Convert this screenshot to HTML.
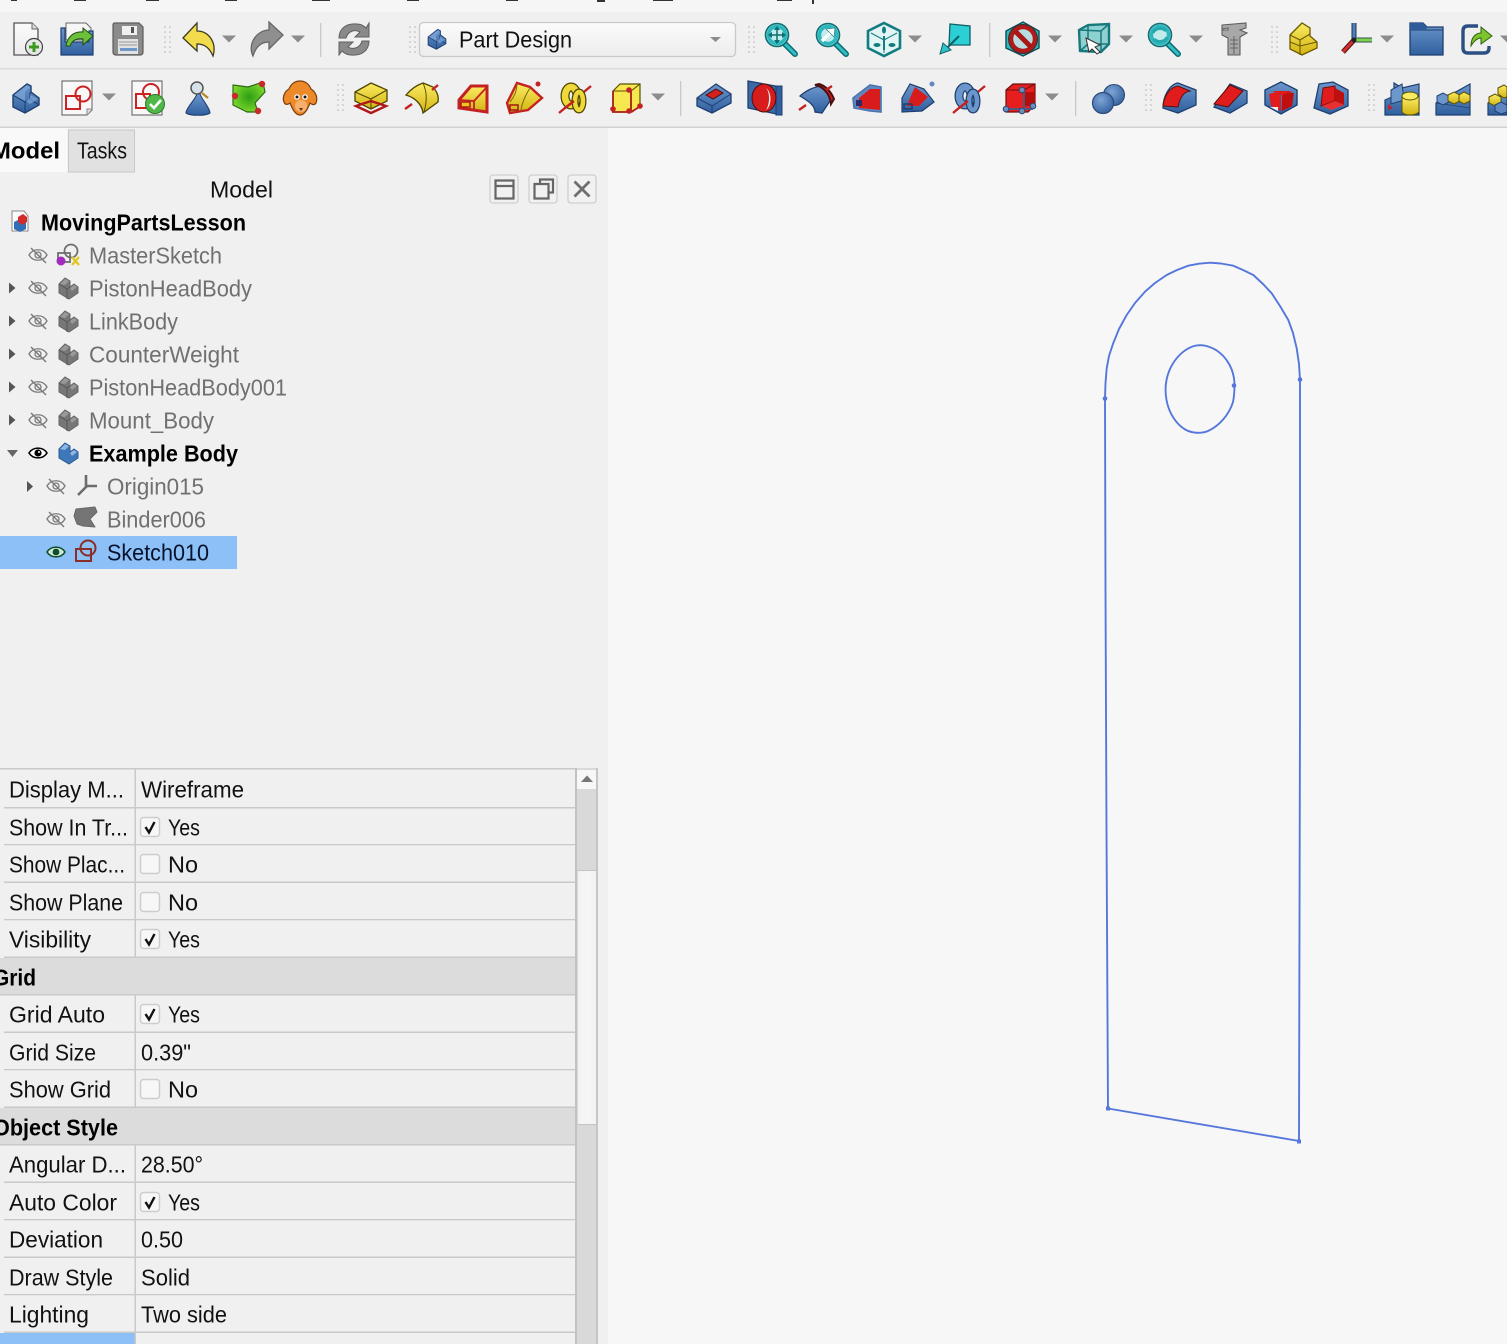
<!DOCTYPE html>
<html><head><meta charset="utf-8">
<style>
html,body{margin:0;padding:0;background:#f0f0f0;width:1507px;height:1344px;overflow:hidden}
svg{display:block;filter:blur(.3px)}
text{font-family:"Liberation Sans",sans-serif;font-size:23px;fill:#111}
.g{fill:#707070}
.b{font-weight:bold;fill:#000}
</style></head><body>
<svg width="1507" height="1344" viewBox="0 0 1507 1344" xmlns="http://www.w3.org/2000/svg">
<defs>
<linearGradient id="cb" x1="0" y1="0" x2="0" y2="1"><stop offset="0" stop-color="#fbfbfb"/><stop offset="1" stop-color="#ececec"/></linearGradient>
<linearGradient id="blue" x1="0" y1="0" x2="0" y2="1"><stop offset="0" stop-color="#6c97cc"/><stop offset="1" stop-color="#2f5f9e"/></linearGradient>
<linearGradient id="yel" x1="0" y1="0" x2="0" y2="1"><stop offset="0" stop-color="#fbec62"/><stop offset="1" stop-color="#d2b312"/></linearGradient>
<linearGradient id="red" x1="0" y1="0" x2="1" y2="1"><stop offset="0" stop-color="#f23a3a"/><stop offset="1" stop-color="#bb0a0a"/></linearGradient>
<radialGradient id="sph" cx=".4" cy=".35" r=".75"><stop offset="0" stop-color="#7ea4d6"/><stop offset="1" stop-color="#2e5c9a"/></radialGradient>
<radialGradient id="grn" cx=".5" cy=".5" r=".62"><stop offset="0" stop-color="#2c9e14"/><stop offset="1" stop-color="#88e030"/></radialGradient>

<g id="dd"><path d="M-7 -3.5H7L0 3.5Z" fill="#8c8c8c"/></g>
<g id="grip" fill="#b4b4b4"><circle cx="0" cy="0" r=".8"/><circle cx="5" cy="0" r=".8"/><circle cx="0" cy="5" r=".8"/><circle cx="5" cy="5" r=".8"/><circle cx="0" cy="10" r=".8"/><circle cx="5" cy="10" r=".8"/><circle cx="0" cy="15" r=".8"/><circle cx="5" cy="15" r=".8"/><circle cx="0" cy="20" r=".8"/><circle cx="5" cy="20" r=".8"/><circle cx="0" cy="25" r=".8"/><circle cx="5" cy="25" r=".8"/></g>

<g id="eyeoff" fill="none" stroke="#7b7b7b" stroke-width="1.300"><path d="M-9 0C-5 -7 5 -7 9 0C5 7 -5 7 -9 0Z"/><circle cx="0" cy="0" r="3"/><path d="M-7 -7L8 8" stroke-width="1.500"/></g>
<g id="eye"><path d="M-9 0C-5 -6.5 5 -6.5 9 0C5 6.5 -5 6.5 -9 0Z" fill="#fff" stroke="#000" stroke-width="1.600"/><circle cx="0" cy="0" r="3.600" fill="#000"/><circle cx="1" cy="-1" r="1" fill="#fff"/></g>
<g id="eyeg"><path d="M-9 0C-5 -6.500 5 -6.500 9 0C5 6.500 -5 6.500 -9 0Z" fill="#cfe8d8" stroke="#0d4d2c" stroke-width="1.600"/><circle cx="0" cy="0" r="3.400" fill="#0d4d2c"/></g>
<g id="gbody"><path d="M-9 -4L-3 -10L2 -7V-1L6 -4L10 -1V5L1 11L-9 5Z" fill="#777" stroke="#666" stroke-width="1"/><path d="M-9 -4L-1 1V11M-1 1L2 -1" fill="none" stroke="#555" stroke-width="1"/><path d="M-8 -4L-3 -9L1 -7L-3 -3ZM2 0L6 -3L9 -1L4 3Z" fill="#9a9a9a"/></g>
<g id="arrowr"><path d="M-3 -5.500L3.500 0L-3 5.500Z" fill="#555"/></g>

<g id="bstair"><path d="M-13 -3L1 -14L5 -12V-6L13 0V7L-1 15L-13 9Z" fill="url(#blue)" stroke="#1f3f70" stroke-width="1.400"/><path d="M-13 -3L-1 4V15M-1 4L4 1V-5L5 -6M4 1L13 7" fill="none" stroke="#1f3f70" stroke-width="1.100"/><path d="M-12 -3L1 -13L4 -11L-1 -6V3ZM0 3L4 0V-3L12 1L4 6Z" fill="#7ea6d8" opacity=".75"/></g>
<g id="mag" fill="none"><path d="M6 7L18 19" stroke="#0f6e72" stroke-width="6" stroke-linecap="round"/><path d="M6 7L18 19" stroke="#2ec0c6" stroke-width="3" stroke-linecap="round"/><circle cx="0" cy="0" r="11.500" fill="#8fd8da" stroke="#0f6e72" stroke-width="1.600"/><circle cx="0" cy="0" r="8.500" fill="#c2ecec" stroke="#2ab7bd" stroke-width="3.400"/></g>
</defs>

<rect width="1507" height="1344" fill="#f0f0f0"/>
<rect width="1507" height="12" fill="#f6f6f6"/>
<g fill="#333"><rect x="11" y="0" width="6" height="1"/><rect x="74" y="0" width="12" height="1"/><rect x="146" y="0" width="13" height="1"/><rect x="225" y="0" width="12" height="1"/><rect x="312" y="0" width="18" height="1"/><rect x="407" y="0" width="12" height="1"/><rect x="506" y="0" width="12" height="1"/><rect x="597" y="0" width="8" height="2"/><rect x="653" y="0" width="20" height="1"/><rect x="777" y="0" width="15" height="1"/><rect x="812" y="0" width="2" height="4"/></g>
<rect x="0" y="68" width="1507" height="1.500" fill="#dcdcdc"/>
<rect x="0" y="126.500" width="1507" height="1.500" fill="#d2d2d2"/>
<rect x="608" y="128" width="899" height="1216" fill="#f7f7f7"/>

<!-- grips, separators -->
<use href="#grip" x="165" y="27"/><use href="#grip" x="410" y="27"/><use href="#grip" x="749" y="27"/><use href="#grip" x="1272" y="27"/>
<use href="#grip" x="338" y="85"/><use href="#grip" x="1146" y="85"/><use href="#grip" x="1369" y="85"/>
<g fill="#c8c8c8"><rect x="320" y="23" width="1.300" height="34"/><rect x="989" y="23" width="1.300" height="34"/><rect x="680" y="81" width="1.300" height="35"/><rect x="1075" y="81" width="1.300" height="35"/></g>

<!-- dropdown arrows -->
<use href="#dd" x="229" y="39"/><use href="#dd" x="298" y="39"/><use href="#dd" x="915" y="39"/><use href="#dd" x="1055" y="39"/><use href="#dd" x="1126" y="39"/><use href="#dd" x="1196" y="39"/><use href="#dd" x="1387" y="39"/><use href="#dd" x="1507" y="39"/>
<use href="#dd" x="109" y="97"/><use href="#dd" x="658" y="97"/><use href="#dd" x="1052" y="97"/>

<!-- ROW 1 -->
<path d="M14 23H32L38 29V55H14Z" fill="url(#cb)" stroke="#555" stroke-width="1.300"/><path d="M32 23V29H38" fill="#ddd" stroke="#666"/>
<circle cx="34" cy="47" r="8.500" fill="#e6e6e6" stroke="#444" stroke-width="1.200"/><path d="M34 42V52M29 47H39" stroke="#3c9a1e" stroke-width="3"/>

<path d="M66 23H86L91 28V40H66Z" fill="#f6f6f6" stroke="#666"/><path d="M61 28H65V42H89V31H93V55H61Z" fill="url(#blue)" stroke="#1f3f70" stroke-width="1.200"/>
<path d="M66 46C67 37 74 31 83 32V28L93 36L83 45V39C76 38 72 41 70 46Z" fill="#6cc03a" stroke="#1f4f10"/>

<path d="M115 23H139L143 27V52Q143 55 140 55H116Q113 55 113 52V25Q113 23 115 23Z" fill="#8b8b8b" stroke="#5c5c5c" stroke-width="1.200"/><rect x="122" y="26" width="15" height="9" fill="#f0f0f0"/><rect x="131" y="27" width="3" height="6" fill="#555"/><rect x="118" y="39" width="20" height="15" fill="#e2e2e2"/><path d="M119 42H137M119 45H137" stroke="#999"/><rect x="120" y="48" width="17" height="3" fill="#6d97c8"/>

<path d="M183 38L197 23V31C209 31 217 43 213 56C209 47 204 44 197 44V51Z" fill="#f2dc4e" stroke="#3a3a20" stroke-width="1.300"/>
<path d="M283 35L269 22V30C257 30 247 44 253 56C256 46 262 42 269 42V49Z" fill="#8f8f8f" stroke="#666" stroke-width="1.300"/>

<path d="M339 38C339 28 347 23 357 24C361 24 364 26 366 28L369 23V37H355L360 32C355 29 348 31 346 38Z" fill="#8a8a8a" stroke="#5f5f5f"/>
<path d="M369 41C369 51 361 56 351 55C347 55 344 53 342 51L339 55V42H353L348 47C353 50 360 48 362 41Z" fill="#8a8a8a" stroke="#5f5f5f"/>

<rect x="419.500" y="22.500" width="316" height="34" rx="4" fill="url(#cb)" stroke="#c9c9c9" stroke-width="1.300"/>
<use href="#bstair" transform="translate(437 39) scale(.68)"/>
<text x="459" y="47.500" font-size="23.500" textLength="113" lengthAdjust="spacingAndGlyphs">Part Design</text>
<path d="M710 37H721L715.500 42Z" fill="#8c8c8c"/>

<use href="#mag" x="777" y="35"/><path d="M777 28V42M770 35H784" stroke="#0f6e72" stroke-width="1.500"/><path d="M777 26L774 30H780ZM777 44L774 40H780ZM768 35L772 32V38ZM786 35L782 32V38Z" fill="#0f6e72"/>
<use href="#mag" x="828" y="35"/><path d="M822 41L831 32" stroke="#fff" stroke-width="3.500"/><path d="M835 28L826 29L834 37Z" fill="#fff" stroke="#0f6e72" stroke-width=".6"/>
<path d="M884 23L900 31V48L884 56L868 48V31Z" fill="#e3f4f4" stroke="#137c80" stroke-width="2.600"/><path d="M871 33L884 40L897 33M884 40V53" fill="none" stroke="#137c80" stroke-width="1"/><ellipse cx="884" cy="30" rx="2" ry="3.500" fill="#137c80"/><ellipse cx="877" cy="45" rx="3.500" ry="2" fill="#137c80"/><ellipse cx="892" cy="45" rx="3.500" ry="2" fill="#137c80"/><path d="M884 36V50" stroke="#137c80" stroke-width="2"/>
<path d="M950 24L970 26V45H949Z" fill="#2cd0d4" stroke="#0f5f66" stroke-width="1.300"/><path d="M959 36L947 48" stroke="#0f5f66" stroke-width="2"/><path d="M940 54L943 43L951 50Z" fill="#2cc4c8" stroke="#0f5f66"/>

<path d="M1023 22L1039 31V48L1023 56L1006 48V31Z" fill="#2cbcc2" stroke="#104d55" stroke-width="1.400"/><circle cx="1023" cy="39" r="12" fill="#b8dde0" stroke="#b01a1a" stroke-width="4.500"/><path d="M1015 31L1031 47" stroke="#a81616" stroke-width="5"/><circle cx="1023" cy="39" r="14.500" fill="none" stroke="#333" stroke-width="1"/>
<path d="M1079 30L1088 25L1109 24V44L1101 52L1080 51Z" fill="#8fd0d0" stroke="#18787b" stroke-width="2.400"/><path d="M1079 30L1101 31L1109 24M1101 31V52M1088 25V44L1080 51M1088 44H1109" fill="none" stroke="#18787b" stroke-width="1.500"/><path d="M1086 38L1100 45L1095 47L1100 52L1097 54L1092 49L1089 52Z" fill="#fff" stroke="#333"/>
<use href="#mag" x="1160" y="35"/><path d="M1153 33C1155 28 1162 27 1166 31M1167 37C1165 42 1158 43 1154 39" fill="none" stroke="#25a9ae" stroke-width="3"/>

<path d="M1222 25L1246 23V28L1240 30L1247 33L1240 37V55H1228V38L1222 35V30H1228V28L1222 29Z" fill="#a8a8a8" stroke="#5e5e5e" stroke-width="1.100"/><path d="M1234 36V54M1230 40H1238M1230 44H1238M1230 48H1238" stroke="#555" stroke-width=".8"/>

<path d="M1290 35L1302 23L1310 28V36L1317 42V48L1302 55L1290 49Z" fill="url(#yel)" stroke="#6b5a00" stroke-width="1.300"/><path d="M1290 35L1300 40V46L1290 42M1300 40L1310 34M1300 46L1317 42M1300 46V55" fill="none" stroke="#6b5a00" stroke-width="1.100"/>

<path d="M1354 39V23" stroke="#234" stroke-width="5"/><path d="M1354 39V23" stroke="#4b7ec2" stroke-width="3"/><path d="M1354 40H1372" stroke="#355" stroke-width="5"/><path d="M1354 40H1372" stroke="#7ed44a" stroke-width="3"/><path d="M1354 40L1343 52" stroke="#511" stroke-width="5"/><path d="M1354 40L1343 52" stroke="#d03030" stroke-width="3"/><circle cx="1354" cy="40" r="2.500" fill="#222"/>

<path d="M1410 23H1423L1427 27H1443V55H1410Z" fill="url(#blue)" stroke="#1f3f70" stroke-width="1.300"/><path d="M1410 30H1443" stroke="#1f3f70"/><path d="M1410 23H1423L1427 27L1426 30H1410Z" fill="#2e5c9a"/>

<path d="M1478 26H1468Q1463 26 1463 31V48Q1463 53 1468 53H1484Q1489 53 1489 48V46" fill="none" stroke="#2b4f82" stroke-width="3.400"/>
<path d="M1471 46C1471 37 1476 33 1481 33V27L1492 36L1481 44V38C1477 38 1474 41 1471 46Z" fill="#7ec42e" stroke="#2f6010"/>

<!-- ROW 2 -->
<use href="#bstair" x="26" y="98"/>

<path d="M62 81H92V110L87 115H62Z" fill="#f8f8f8" stroke="#777" stroke-width="1.200"/><path d="M92 109H87V115" fill="#ddd" stroke="#888"/>
<circle cx="83" cy="94" r="7.500" fill="none" stroke="#cc2222" stroke-width="2"/><rect x="66" y="96" width="14" height="13" fill="none" stroke="#cc2222" stroke-width="2"/>

<path d="M132 81H162V115H132Z" fill="#f8f8f8" stroke="#777" stroke-width="1.200"/><circle cx="151" cy="92" r="8" fill="none" stroke="#cc2222" stroke-width="2"/><rect x="136" y="94" width="14" height="14" fill="none" stroke="#cc2222" stroke-width="2"/>
<circle cx="155" cy="104" r="9.500" fill="#4eb848" stroke="#2e7a2a"/><path d="M150 104L154 108L161 100" fill="none" stroke="#fff" stroke-width="2.600"/>

<path d="M197 94C195 100 186 108 186 113C190 116 206 116 210 113C210 108 202 100 200 94Z" fill="url(#blue)" stroke="#1f3f70" stroke-width="1.100"/>
<circle cx="197" cy="88" r="6" fill="#d6e2ea" stroke="#555" stroke-width="1.500"/><path d="M202 93L208 98" stroke="#b98a2e" stroke-width="2.400"/>

<path d="M233 85L248 87L263 82L265 92L255 103L258 112L247 112L233 105L233 95Z" fill="url(#grn)" stroke="#2c6a12" stroke-width="1.200" stroke-linejoin="round"/><circle cx="262" cy="84" r="3.200" fill="#c62a2a"/><circle cx="235" cy="96" r="3.200" fill="#c62a2a"/><circle cx="258" cy="111" r="3.200" fill="#c62a2a"/>

<path d="M300 81C305 81 309 84 311 89C316 92 318 98 316 103C314 106 311 104 310 103C308 108 305 115 300 115C295 115 292 108 290 103C288 105 285 105 284 102C282 97 285 91 289 89C291 84 295 81 300 81Z" fill="#ec8a2a" stroke="#7a3e0e" stroke-width="1.200"/><ellipse cx="301" cy="106" rx="6" ry="6" fill="#f5b070"/><circle cx="297" cy="97" r="2.800" fill="#fff"/><circle cx="305" cy="97" r="2.800" fill="#fff"/><circle cx="297" cy="97" r="1.500" fill="#111"/><circle cx="305" cy="97" r="1.500" fill="#111"/><path d="M299 108L303 108L301 111Z" fill="#6b3210"/>

<!-- pad yellow -->
<path d="M355 92L371 83L387 90V101L371 109L355 101Z" fill="url(#yel)" stroke="#4e4500" stroke-width="1.300"/><path d="M355 92L371 99L387 90M371 99V109" fill="none" stroke="#4e4500" stroke-width="1.100"/><path d="M356 106L371 101L386 106L371 113Z" fill="none" stroke="#b01818" stroke-width="2.400"/>
<!-- revolve yellow -->
<path d="M406 95C411 89 417 85 423 83L433 87C437 92 439 96 438 102L423 113C422 105 416 98 406 95Z" fill="url(#yel)" stroke="#4e4500" stroke-width="1.300"/><path d="M423 83C426 90 428 98 424 112" fill="none" stroke="#4e4500" stroke-width=".9"/><path d="M405 109L412 104M432 90L438 85" stroke="#c42222" stroke-width="2.400"/>
<!-- loft yellow -->
<path d="M459 100L471 86H487V112L459 108Z" fill="url(#yel)" stroke="#c42222" stroke-width="3"/><path d="M459 100L474 101V110M474 101L486 88" fill="none" stroke="#c42222" stroke-width="1.800"/><rect x="461" y="102" width="9" height="5" fill="#e8c81c" stroke="#b01818" stroke-width="1.500"/>
<!-- pipe yellow -->
<path d="M507 103L517 83L530 87L542 98L528 110L510 113Z" fill="url(#yel)" stroke="#c42222" stroke-width="2.400"/><path d="M517 84C517 91 514 97 510 102M530 88C526 94 522 103 521 110" fill="none" stroke="#7a6a00"/><rect x="510" y="105" width="8" height="5" fill="none" stroke="#a01818" stroke-width="1.500"/><circle cx="538" cy="84" r="2.500" fill="#c42222"/>
<!-- helix yellow -->
<path d="M559 113L591 86" stroke="#c42222" stroke-width="2.400"/><ellipse cx="571" cy="96" rx="6" ry="9" fill="none" stroke="#4e4500" stroke-width="9"/><ellipse cx="571" cy="96" rx="6" ry="9" fill="none" stroke="#eed83a" stroke-width="6.500"/><ellipse cx="579" cy="101" rx="4" ry="9" fill="none" stroke="#4e4500" stroke-width="7"/><ellipse cx="579" cy="101" rx="4" ry="9" fill="none" stroke="#eed83a" stroke-width="4.500"/><path d="M565 108L574 101" stroke="#c42222" stroke-width="2.400"/>
<!-- primitive yellow -->
<path d="M613 91L620 84H640V106L632 112H613Z" fill="#f6e84e" stroke="#5a5000" stroke-width="1.200"/><path d="M613 91H631V112M631 91L640 84" fill="none" stroke="#5a5000" stroke-width="1.100"/><path d="M613 91V112H631L641 106M631 91V112" fill="none" stroke="#a82020" stroke-width="1.800"/><circle cx="629" cy="90" r="2.800" fill="#c42222"/><circle cx="613" cy="109" r="2.800" fill="#c42222"/><circle cx="629" cy="111" r="2.800" fill="#c42222"/><circle cx="640" cy="106" r="2.800" fill="#c42222"/>

<!-- pocket blue -->
<path d="M697 98L716 84L731 94V103L712 113L697 106Z" fill="url(#blue)" stroke="#1f3f70" stroke-width="1.300"/><path d="M697 98L712 106L731 94M712 106V113" fill="none" stroke="#1f3f70"/><path d="M706 95L716 89L723 93L713 99Z" fill="#d62020" stroke="#4a1010"/>
<!-- hole -->
<path d="M748 81L781 87V115L748 108Z" fill="#3a69a6" stroke="#1f3f70" stroke-width="1.300"/><path d="M776 86H782V115H776Z" fill="#2f5f9e" stroke="#1f3f70"/><ellipse cx="764" cy="98" rx="12" ry="14" fill="#d81c1c" stroke="#4a1010"/><path d="M766 88C770 92 770 104 766 110C772 106 772 92 766 88Z" fill="#eee"/>
<!-- groove -->
<path d="M800 96C807 90 812 88 820 86L832 98L822 113L815 112C815 106 810 102 800 96Z" fill="url(#blue)" stroke="#1f3f70" stroke-width="1.300"/><path d="M815 85C822 86 830 93 831 104L834 99C831 92 826 86 819 84Z" fill="#d81c1c" stroke="#4a1010" stroke-width="2"/><path d="M799 110L806 105M826 90L832 86" stroke="#c42222" stroke-width="2.400"/>
<!-- sub loft -->
<path d="M853 98L870 85L881 87V112L870 111L854 108Z" fill="#5f88c0" stroke="#4a74ac" stroke-width="1.600"/><path d="M859 98L870 89H880V110L859 108Z" fill="#d81c1c"/><rect x="856" y="100" width="6" height="6" fill="#2b2b6a"/>
<!-- sub pipe -->
<path d="M902 98L910 84L924 89L934 102L922 111L902 112Z" fill="url(#blue)" stroke="#1f3f70" stroke-width="1.200"/><path d="M910 98L915 87L928 97L919 106L907 106Z" fill="#d81c1c"/><rect x="904" y="104" width="8" height="5" fill="none" stroke="#1f3f70" stroke-width="1.500"/><circle cx="932" cy="84" r="2.500" fill="#5f88c0"/>
<!-- sub helix -->
<path d="M953 113L985 86" stroke="#c42222" stroke-width="2.400"/><ellipse cx="965" cy="96" rx="6" ry="9" fill="none" stroke="#1f3f70" stroke-width="9"/><ellipse cx="965" cy="96" rx="6" ry="9" fill="none" stroke="#6c97cc" stroke-width="6.500"/><ellipse cx="973" cy="101" rx="4" ry="9" fill="none" stroke="#1f3f70" stroke-width="7"/><ellipse cx="973" cy="101" rx="4" ry="9" fill="none" stroke="#6c97cc" stroke-width="4.500"/><path d="M959 108L968 101" stroke="#c42222" stroke-width="2.400"/>
<!-- sub primitive -->
<path d="M1006 90L1013 84H1035V105L1028 112H1006Z" fill="#e61e1e" stroke="#701010" stroke-width="1.200"/><path d="M1006 90H1024V112M1024 90L1035 84" fill="none" stroke="#701010"/><path d="M1024 92H1035V106H1024Z" fill="#b50c0c"/><path d="M1006 109H1033M1024 90V112" stroke="#3f5f8f" stroke-width="1.800"/><circle cx="1022" cy="90" r="2.800" fill="#6c8fbd" stroke="#2a4a78"/><circle cx="1006" cy="109" r="2.800" fill="#6c8fbd" stroke="#2a4a78"/><circle cx="1022" cy="111" r="2.800" fill="#6c8fbd" stroke="#2a4a78"/><circle cx="1033" cy="106" r="2.800" fill="#6c8fbd" stroke="#2a4a78"/>
<!-- boolean -->
<circle cx="1114" cy="95" r="10.500" fill="url(#sph)" stroke="#2a4a78" stroke-width="1.100"/><circle cx="1103" cy="103" r="10.500" fill="url(#sph)" stroke="#2a4a78" stroke-width="1.200"/>
<!-- fillet -->
<path d="M1163 108C1163 96 1170 84 1178 83L1196 90V105L1178 113L1163 108Z" fill="url(#blue)" stroke="#1f3f70" stroke-width="1.300"/><path d="M1163 106C1164 96 1170 87 1178 86L1190 91C1183 92 1180 98 1178 107Z" fill="#e01c1c" stroke="#5a1010"/>
<!-- chamfer -->
<path d="M1214 107L1230 84L1247 91V103L1230 113Z" fill="url(#blue)" stroke="#1f3f70" stroke-width="1.300"/><path d="M1214 104L1230 85L1243 91L1228 107Z" fill="#e01c1c" stroke="#5a1010"/>
<!-- draft -->
<path d="M1265 90L1281 82L1297 90V105L1281 114L1265 105Z" fill="url(#blue)" stroke="#1f3f70" stroke-width="1.400"/><path d="M1269 94L1281 91V111L1271 106Z" fill="#e01c1c"/><path d="M1282 91L1294 93L1292 106L1282 111Z" fill="#c00f0f"/><path d="M1272 91H1292L1282 95Z" fill="#e01c1c"/><path d="M1270 107H1278V111Z" fill="#eee"/>
<!-- thickness -->
<path d="M1319 84L1333 82L1348 90V106L1330 114L1314 108Z" fill="url(#blue)" stroke="#1f3f70" stroke-width="1.300"/><path d="M1323 88L1335 86V101L1321 106Z" fill="#e01c1c" stroke="#701010"/><path d="M1335 88L1344 93V105L1335 101Z" fill="#c00f0f"/><path d="M1322 106L1335 101L1344 105L1331 110Z" fill="#e83030"/>
<!-- mirror -->
<path d="M1385 100L1394 96V83L1402 88L1419 84V115H1385Z" fill="url(#blue)" stroke="#1f3f70" stroke-width="1.200"/><path d="M1391 90L1402 84L1404 100L1391 104Z" fill="#6c97cc" stroke="#1f3f70"/><path d="M1402 97V112C1405 116 1415 116 1419 112V97" fill="url(#yel)" stroke="#5a5000"/><ellipse cx="1410" cy="96" rx="8" ry="4" fill="#f8ec60" stroke="#5a5000"/><path d="M1388 104L1393 108L1388 110Z" fill="#c42222"/>
<!-- linear -->
<path d="M1436 115V103L1470 84V115Z" fill="url(#blue)" stroke="#1f3f70" stroke-width="1.200"/><path d="M1436 103L1470 108" stroke="#1f3f70" stroke-width=".8"/><path d="M1437 96L1443 93L1449 96V102L1443 105L1437 102Z" fill="#6c97cc" stroke="#1f3f70"/><path d="M1448 95L1454 92L1460 95V101L1454 104L1448 101Z" fill="url(#yel)" stroke="#5a5000"/><path d="M1459 95L1464 92L1470 95V101L1464 104L1459 101Z" fill="url(#yel)" stroke="#5a5000"/>
<!-- polar -->
<path d="M1488 115V103L1507 92V115Z" fill="url(#blue)" stroke="#1f3f70" stroke-width="1.200"/><path d="M1489 97L1495 94L1501 97V103L1495 106L1489 103Z" fill="url(#yel)" stroke="#5a5000"/><path d="M1498 88L1504 85L1507 87V97L1504 98L1498 94Z" fill="url(#yel)" stroke="#5a5000"/><path d="M1495 105L1501 102L1507 105V112L1501 114L1495 111Z" fill="#5f88c0" stroke="#1f3f70"/>

<!-- TABS -->
<rect x="0" y="128" width="67.500" height="44" fill="#f9f9f9"/>
<rect x="68.500" y="130" width="66" height="42" fill="#e1e1e1" stroke="#c8c8c8"/>
<text x="-9" y="158.500" class="b" font-size="23" textLength="69" lengthAdjust="spacingAndGlyphs">Model</text>
<text x="77" y="158.500" font-size="23" textLength="50" lengthAdjust="spacingAndGlyphs">Tasks</text>

<!-- panel header -->
<text x="210" y="197.500" font-size="23" textLength="63" lengthAdjust="spacingAndGlyphs">Model</text>
<g fill="#f1f1f1" stroke="#cfcfcf" stroke-width="1.300"><rect x="490" y="175" width="28" height="28" rx="3"/><rect x="529" y="175" width="28" height="28" rx="3"/><rect x="568" y="175" width="28" height="28" rx="3"/></g>
<path d="M495.500 180.500H513.500V198.500H495.500ZM495.500 186H513.500" fill="none" stroke="#666" stroke-width="2.200"/>
<path d="M540 183V179.500H553V192.500H549M534.500 184H548.500V198.500H534.500Z" fill="none" stroke="#666" stroke-width="2.200"/>
<path d="M574.500 181.500L589.500 196.500M589.500 181.500L574.500 196.500" stroke="#6f6f6f" stroke-width="2.800"/>

<!-- TREE -->
<rect x="0" y="536" width="237" height="33" fill="#8cc0f6"/>
<g transform="translate(0,-1)">
<path d="M12 212H24L28 217V232H12Z" fill="#fafafa" stroke="#888"/><path d="M14 223L20 220L26 223V230L20 233L14 230Z" fill="#2f6fb6"/><path d="M18 218L23 215L27 218V223L22 226L18 223Z" fill="#d42a2a"/>
<text x="41" y="231.500" class="b" textLength="205" lengthAdjust="spacingAndGlyphs">MovingPartsLesson</text>

<use href="#eyeoff" x="38" y="256"/>
<g fill="none" stroke="#6f6f6f" stroke-width="1.800"><circle cx="71" cy="252" r="6.500"/><rect x="58" y="254" width="12" height="9"/></g><circle cx="61" cy="262" r="4.500" fill="#a32bc0"/><path d="M72 258L79 266M79 258L72 266" stroke="#e0c820" stroke-width="2.400"/>
<text x="89" y="264.500" class="g" textLength="133" lengthAdjust="spacingAndGlyphs">MasterSketch</text>

<use href="#arrowr" x="12" y="289"/><use href="#eyeoff" x="38" y="289"/><use href="#gbody" x="68" y="289"/>
<text x="89" y="297.500" class="g" textLength="163" lengthAdjust="spacingAndGlyphs">PistonHeadBody</text>
<use href="#arrowr" x="12" y="322"/><use href="#eyeoff" x="38" y="322"/><use href="#gbody" x="68" y="322"/>
<text x="89" y="330.500" class="g" textLength="89" lengthAdjust="spacingAndGlyphs">LinkBody</text>
<use href="#arrowr" x="12" y="355"/><use href="#eyeoff" x="38" y="355"/><use href="#gbody" x="68" y="355"/>
<text x="89" y="363.500" class="g" textLength="150" lengthAdjust="spacingAndGlyphs">CounterWeight</text>
<use href="#arrowr" x="12" y="388"/><use href="#eyeoff" x="38" y="388"/><use href="#gbody" x="68" y="388"/>
<text x="89" y="396.500" class="g" textLength="198" lengthAdjust="spacingAndGlyphs">PistonHeadBody001</text>
<use href="#arrowr" x="12" y="421"/><use href="#eyeoff" x="38" y="421"/><use href="#gbody" x="68" y="421"/>
<text x="89" y="429.500" class="g" textLength="125" lengthAdjust="spacingAndGlyphs">Mount_Body</text>

<path d="M7 451H18L12.500 458Z" fill="#666"/><use href="#eye" x="38" y="454"/>
<path d="M59 450L65 444L70 447V453L74 450L78 453V459L69 465L59 459Z" fill="#3f78ba" stroke="#2a5a94"/><path d="M60 450L65 445L69 447L65 451ZM70 454L74 451L77 453L72 457Z" fill="#8fb6e2"/>
<text x="89" y="462.500" class="b" textLength="149" lengthAdjust="spacingAndGlyphs">Example Body</text>

<path d="M27 482L33 487.500L27 493Z" fill="#555"/><use href="#eyeoff" x="56" y="487"/>
<path d="M86 476V489M87 487H97M86 488L78 496" stroke="#6c6c6c" stroke-width="2.600" fill="none"/>
<text x="107" y="495.500" class="g" textLength="97" lengthAdjust="spacingAndGlyphs">Origin015</text>

<use href="#eyeoff" x="56" y="520"/>
<path d="M76 510L95 508L97 513L90 520L95 528L83 527L77 525L74 517Z" fill="#757575" stroke="#686868" stroke-linejoin="round"/>
<text x="107" y="528.500" class="g" textLength="99" lengthAdjust="spacingAndGlyphs">Binder006</text>

<use href="#eyeg" x="56" y="553"/>
<rect x="76" y="550" width="15" height="12" fill="none" stroke="#8a2e2a" stroke-width="2"/><circle cx="88" cy="549" r="7.500" fill="none" stroke="#8a2e2a" stroke-width="2"/>
<text x="107" y="561.500" fill="#06122a" style="fill:#06122a" textLength="102" lengthAdjust="spacingAndGlyphs">Sketch010</text>
</g>

<!-- PROPERTY TABLE -->
<rect x="0" y="958" width="575" height="37" fill="#dcdcdc"/>
<rect x="0" y="1108" width="575" height="37" fill="#dcdcdc"/>
<rect x="0" y="1333" width="135" height="11" fill="#8cc0f6"/>
<g fill="#c9c9c9">
<rect x="0" y="768" width="575" height="1.500"/>
<rect x="4" y="807" width="571" height="1.500"/>
<rect x="4" y="844" width="571" height="1.300"/>
<rect x="4" y="881.500" width="571" height="1.500"/>
<rect x="4" y="919" width="571" height="1.300"/>
<rect x="4" y="956.500" width="571" height="1.500"/>
<rect x="0" y="994" width="575" height="1.500"/>
<rect x="4" y="1031.500" width="571" height="1.500"/>
<rect x="4" y="1069" width="571" height="1.300"/>
<rect x="4" y="1106.500" width="571" height="1.500"/>
<rect x="0" y="1144" width="575" height="1.500"/>
<rect x="4" y="1181.500" width="571" height="1.500"/>
<rect x="4" y="1219" width="571" height="1.300"/>
<rect x="4" y="1256.500" width="571" height="1.500"/>
<rect x="4" y="1294" width="571" height="1.300"/>
<rect x="4" y="1331.500" width="571" height="1.500"/>
<rect x="134.500" y="769" width="1.500" height="188"/>
<rect x="134.500" y="995" width="1.500" height="112"/>
<rect x="134.500" y="1145" width="1.500" height="199"/>
</g>

<g transform="translate(0,-.5)">
<text x="9" y="798" textLength="115" lengthAdjust="spacingAndGlyphs">Display M...</text>
<text x="141" y="798" textLength="103" lengthAdjust="spacingAndGlyphs">Wireframe</text>
<text x="9" y="836" textLength="119" lengthAdjust="spacingAndGlyphs">Show In Tr...</text>
<text x="168" y="836" textLength="32" lengthAdjust="spacingAndGlyphs">Yes</text>
<text x="9" y="873" textLength="116" lengthAdjust="spacingAndGlyphs">Show Plac...</text>
<text x="168" y="873" textLength="30" lengthAdjust="spacingAndGlyphs">No</text>
<text x="9" y="911" textLength="114" lengthAdjust="spacingAndGlyphs">Show Plane</text>
<text x="168" y="911" textLength="30" lengthAdjust="spacingAndGlyphs">No</text>
<text x="9" y="948" textLength="82" lengthAdjust="spacingAndGlyphs">Visibility</text>
<text x="168" y="948" textLength="32" lengthAdjust="spacingAndGlyphs">Yes</text>
<text x="-7" y="986" class="b" textLength="43" lengthAdjust="spacingAndGlyphs">Grid</text>
<text x="9" y="1023" textLength="96" lengthAdjust="spacingAndGlyphs">Grid Auto</text>
<text x="168" y="1023" textLength="32" lengthAdjust="spacingAndGlyphs">Yes</text>
<text x="9" y="1061" textLength="87" lengthAdjust="spacingAndGlyphs">Grid Size</text>
<text x="141" y="1061" textLength="50" lengthAdjust="spacingAndGlyphs">0.39"</text>
<text x="9" y="1098" textLength="102" lengthAdjust="spacingAndGlyphs">Show Grid</text>
<text x="168" y="1098" textLength="30" lengthAdjust="spacingAndGlyphs">No</text>
<text x="-7" y="1136" class="b" textLength="125" lengthAdjust="spacingAndGlyphs">Object Style</text>
<text x="9" y="1173" textLength="117" lengthAdjust="spacingAndGlyphs">Angular D...</text>
<text x="141" y="1173" textLength="62" lengthAdjust="spacingAndGlyphs">28.50°</text>
<text x="9" y="1211" textLength="108" lengthAdjust="spacingAndGlyphs">Auto Color</text>
<text x="168" y="1211" textLength="32" lengthAdjust="spacingAndGlyphs">Yes</text>
<text x="9" y="1248" textLength="94" lengthAdjust="spacingAndGlyphs">Deviation</text>
<text x="141" y="1248" textLength="42" lengthAdjust="spacingAndGlyphs">0.50</text>
<text x="9" y="1286" textLength="104" lengthAdjust="spacingAndGlyphs">Draw Style</text>
<text x="141" y="1286" textLength="49" lengthAdjust="spacingAndGlyphs">Solid</text>
<text x="9" y="1323" textLength="80" lengthAdjust="spacingAndGlyphs">Lighting</text>
<text x="141" y="1323" textLength="86" lengthAdjust="spacingAndGlyphs">Two side</text>
</g>

<!-- checkboxes -->
<g fill="#f7f7f7" stroke="#cdcdcd" stroke-width="1.500">
<rect x="140.500" y="817.500" width="19" height="19" rx="3"/>
<rect x="140.500" y="854.500" width="19" height="19" rx="3"/>
<rect x="140.500" y="892.500" width="19" height="19" rx="3"/>
<rect x="140.500" y="929.500" width="19" height="19" rx="3"/>
<rect x="140.500" y="1004.500" width="19" height="19" rx="3"/>
<rect x="140.500" y="1079.500" width="19" height="19" rx="3"/>
<rect x="140.500" y="1192.500" width="19" height="19" rx="3"/>
</g>
<g fill="none" stroke="#111" stroke-width="2.400">
<path d="M145.500 827L149 832.500L154.500 822"/>
<path d="M145.500 939L149 944.500L154.500 934"/>
<path d="M145.500 1014L149 1019.500L154.500 1009"/>
<path d="M145.500 1202L149 1207.500L154.500 1197"/>
</g>

<!-- SCROLLBAR -->
<rect x="575" y="768" width="23" height="576" fill="#d9d9d9"/>
<rect x="575" y="768" width="2" height="576" fill="#c2c2c2"/>
<rect x="596" y="768" width="2" height="576" fill="#c6c6c6"/>
<rect x="577" y="770" width="19" height="19" fill="#f7f7f7"/>
<path d="M581 782H593L587 775.500Z" fill="#777"/>
<rect x="578" y="871" width="18" height="253" fill="#f3f3f3"/>
<rect x="581" y="871" width="10" height="253" fill="#f7f7f7" opacity=".6"/>
<rect x="577" y="870" width="19" height="1" fill="#c4c4c4"/>
<rect x="577" y="1124" width="19" height="1" fill="#c4c4c4"/>

<!-- SKETCH -->
<g fill="none" stroke="#5577dc" stroke-width="1.900" stroke-linejoin="round">
<path d="M1105 398L1105.500 590L1106.500 830L1108 1108.500L1299 1141L1300 710V380L1299 364L1296.700 348.300L1293 333L1288.300 320L1280 306L1271.700 293.300L1263 284L1253.300 275L1243 270L1233.300 265.700L1221 263.500L1210 262.700L1199 263.700L1188.300 265.700L1177 270L1166.700 275L1155 283L1145 291.700L1135 303L1126.700 315L1119 329L1113.300 343L1109 356L1106.700 368.300L1105.500 383Z"/>
<path d="M1234.500 385C1234.500 370 1227 357 1216 350C1209 346 1201 344 1194 346C1184 349 1175 358 1170 369C1166 378 1164.500 389 1166.500 400C1169 414 1177 425 1186 430C1192 433 1201 434 1208 431C1219 426 1229 415 1233 402C1234 397 1234.500 391 1234.500 385Z"/>
</g>
<g fill="#5577dc"><circle cx="1105" cy="398.500" r="2.300"/><circle cx="1300" cy="379.500" r="2.300"/><circle cx="1234" cy="385.500" r="2.300"/><rect x="1106" y="1106.500" width="4" height="4"/><rect x="1297" y="1139.500" width="4" height="4"/></g>
</svg>
</body></html>
